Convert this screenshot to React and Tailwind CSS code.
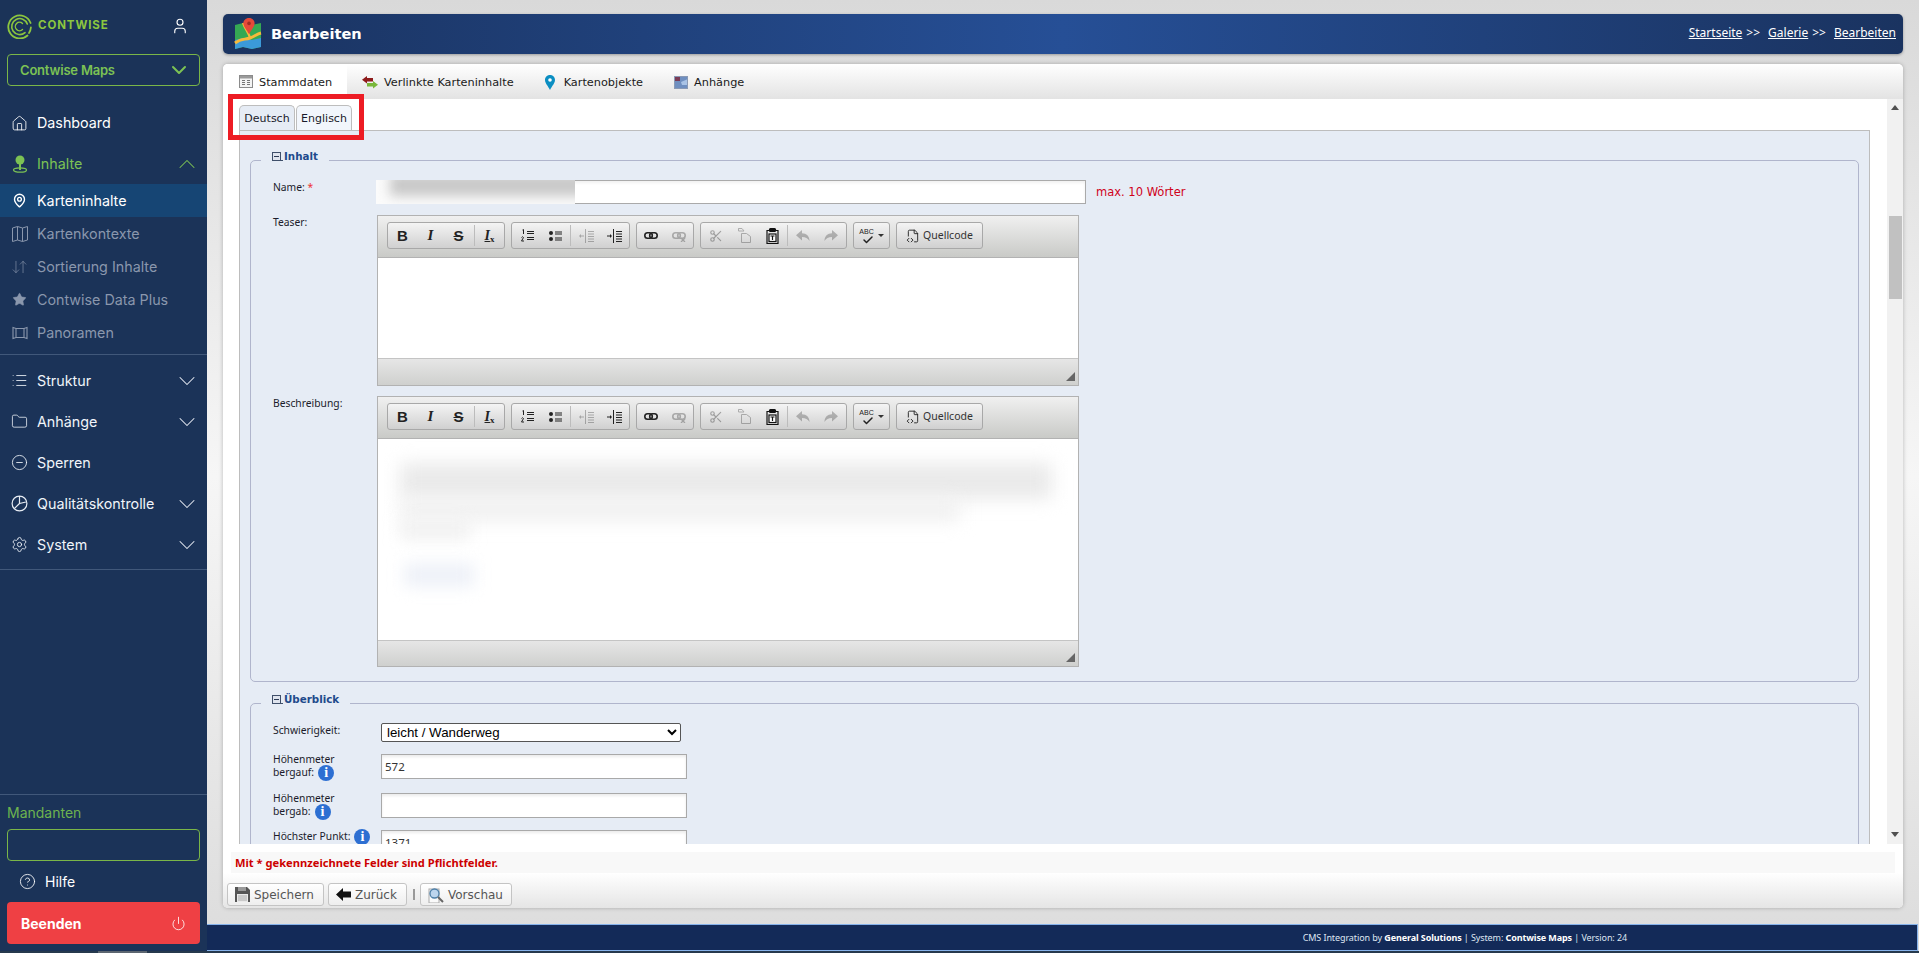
import React from "react";
import {
  User, ChevronDown, ChevronUp, House, MapPin, ArrowDownUp, Star, List as ListIcon, Folder, CircleMinus,
  Settings, CircleHelp, Power, Scissors, Check, FileCode2,
} from "lucide-react";

const Logo = () => (
  <svg width="25" height="25" viewBox="0 0 25 25" fill="none" stroke="#8cc63f" strokeLinecap="round">
    <path d="M20.5 21.5A11.5 11.5 0 1 1 23.6 9" strokeWidth="1.8" />
    <path d="M23.9 13.5A11.5 11.5 0 0 1 22 19" strokeWidth="1.8" />
    <path d="M18 18.6A8 8 0 1 1 20.3 10" strokeWidth="1.6" />
    <path d="M15.5 9.5A4.2 4.2 0 1 0 15.5 15.5" strokeWidth="1.4" />
  </svg>
);

const PinBall = () => (
  <svg width="16" height="18" viewBox="0 0 16 18" fill="#7cc254">
    <circle cx="8" cy="5" r="4.5" />
    <rect x="7" y="8" width="2" height="7" />
    <ellipse cx="8" cy="15" rx="6.5" ry="2.2" fill="none" stroke="#7cc254" strokeWidth="1.3" />
  </svg>
);

const FoldMap = () => (
  <svg width="16" height="16" viewBox="0 0 16 16" fill="none" stroke="#8a97ad" strokeWidth="1">
    <path d="M.5 2l5-1.500 5 1.500 5-1.500v13.500l-5 1.500-5-1.500-5 1.500z" />
    <path d="M5.500.5v13.500M10.500 2v13.500" />
  </svg>
);

const Panorama = () => (
  <svg width="16" height="16" viewBox="0 0 16 16" fill="none" stroke="#8a97ad" strokeWidth="1.1">
    <path d="M1 2.5l3 1h8l3-1v11l-3-1H4l-3 1z" />
    <path d="M4 3.5v9M12 3.5v9" />
  </svg>
);

const PieIcon = () => (
  <svg width="17" height="17" viewBox="0 0 17 17" fill="none" stroke="#e8edf4" strokeWidth="1.2">
    <circle cx="8.5" cy="8.5" r="7.4" />
    <path d="M8.5 1.1v7.4l6.4-1.500M8.500 8.500l-5.200 5.200" />
  </svg>
);

const MapLogo = () => (
  <svg width="28" height="32" viewBox="0 0 28 32">
    <path d="M1 7l8-2 9 2 9-2v24l-9 2-9-2-8 2z" fill="#35a853" />
    <path d="M1 22l8-2 9 2 9-2v9l-9 2-9-2-8 2z" fill="#3b9ad9" />
    <path d="M1 25c6-5 10-3 15-5s7-4 11-5" stroke="#f6b93b" strokeWidth="3" fill="none" />
    <path d="M9 5c2 6 6 10 7 15" stroke="#f6b93b" strokeWidth="2.2" fill="none" />
    <path d="M15 0c3.6 0 5.6 2.6 5.6 5.4 0 3.4-3.6 6.6-5.6 10.6-2-4-5.6-7.2-5.6-10.6C9.400 2.600 11.400 0 15 0z" fill="#e5493a" />
    <circle cx="15" cy="5.400" r="1.800" fill="#a02c22" />
  </svg>
);

const TableIcon = () => (
  <svg width="14" height="15" viewBox="0 0 14 15">
    <rect x=".5" y=".5" width="13" height="12" fill="#f4f4f4" stroke="#8b8b8b" />
    <rect x="1" y="1" width="12" height="2.500" fill="#9a9a9a" />
    <path d="M3 5.500h3M8 5.500h3M3 7.500h3M8 7.500h3M3 9.500h3M8 9.500h3" stroke="#777" />
  </svg>
);

const LinkArrows = () => (
  <svg width="16" height="13" viewBox="0 0 16 13">
    <path d="M5 0v2h6v3.500H5v2L0 3.700z" fill="#8e1b1b" />
    <path d="M11 5v2H5v3.500h6v2l5-3.800z" fill="#79b73a" />
  </svg>
);

const BluePin = () => (
  <svg width="10" height="15" viewBox="0 0 10 15">
    <path d="M5 0c3 0 5 2.200 5 5 0 3-3 6-5 10-2-4-5-7-5-10 0-2.800 2-5 5-5z" fill="#0b8ec2" />
    <circle cx="5" cy="5" r="1.800" fill="#fff" />
  </svg>
);

const Attach = () => (
  <svg width="14" height="13" viewBox="0 0 14 13">
    <rect width="14" height="13" fill="#6f8fc0" />
    <path d="M0 0h6v5H0z" fill="#7a3b56" />
    <path d="M7 6l7-3v6H8z" fill="#a9c3e6" />
    <rect x=".5" y=".5" width="13" height="12" fill="none" stroke="#8a9ab5" />
  </svg>
);

const Collapse = () => (
  <span className="inline-flex items-end mr-[1px]">
    <span className="w-[9px] h-[9px] border border-[#3f4f6a] bg-[#dfe4ee] flex items-center justify-center">
      <span className="w-[5px] h-px bg-[#2c3a55]" />
    </span>
    <span className="w-[2px] h-px bg-[#3f4f6a]" />
  </span>
);

const Info = () => (
  <span className="inline-flex shrink-0 w-[16px] h-[16px] rounded-full bg-[#2d6fd2] text-white items-center justify-center font-['Liberation_Serif',serif] font-bold text-[14px] leading-none">i</span>
);

const SideRow = ({ icon, label, h, color = "text-[#f1f5fa]", chevron, active }) => (
  <div className={`flex items-center pl-[11px] pr-[6px] ${h} ${color} ${active ? "bg-[#164574]" : ""}`}>
    <span className="w-[17px] flex justify-center mr-[9px] shrink-0">{icon}</span>
    <span className="flex-1 pt-[1px] text-[14.3px] leading-none">{label}</span>
    {chevron}
  </div>
);

const Down = () => <ChevronDown size={28} strokeWidth={0.9} className="text-[#e8edf4] -my-[4px]" />;

function Sidebar() {
  return (
    <aside className="w-[207px] shrink-0 bg-[#1b3358] flex flex-col font-['Inter',sans-serif]">
      <div className="flex items-center h-[24px] mt-[14px] pl-[7px]">
        <Logo />
        <span className="ml-[6px] text-[#8cc63f] text-[11.5px] font-bold tracking-[0.9px] leading-none">CONTWISE</span>
        <User size={18} strokeWidth={1.5} className="text-white ml-[62px]" />
      </div>
      <div className="mx-[7px] mt-[16px] h-[32px] border border-[#7ab648] rounded-[4px] flex items-center justify-between pl-[12px] pr-[8px] text-[#7cc254] font-semibold text-[13px] tracking-[-0.2px]">
        <span className="pt-[1px]">Contwise Maps</span>
        <ChevronDown size={24} strokeWidth={2} />
      </div>
      <div className="mt-[20px]">
        <SideRow h="h-[34px]" icon={<House size={17} strokeWidth={1.2} />} label="Dashboard" color="text-white" />
      </div>
      <div className="mt-[7px]">
        <SideRow
          h="h-[34px]"
          color="text-[#7cc254]"
          icon={<PinBall />}
          label="Inhalte"
          chevron={<ChevronUp size={28} strokeWidth={0.9} className="-my-[4px]" />}
        />
      </div>
      <div className="mt-[3px]">
        <SideRow h="h-[33px]" active color="text-white" icon={<MapPin size={15} strokeWidth={2.2} />} label="Karteninhalte" />
        <SideRow h="h-[33px]" color="text-[#8a97ad]" icon={<FoldMap />} label="Kartenkontexte" />
        <SideRow h="h-[33px]" color="text-[#8a97ad]" icon={<ArrowDownUp size={18} strokeWidth={0.9} />} label="Sortierung Inhalte" />
        <SideRow h="h-[33px]" color="text-[#8a97ad]" icon={<Star size={15} fill="currentColor" strokeWidth={1} />} label="Contwise Data Plus" />
        <SideRow h="h-[33px]" color="text-[#8a97ad]" icon={<Panorama />} label="Panoramen" />
      </div>
      <div className="h-px bg-[#41587a] mt-[5px]" />
      <div className="mt-[5px]">
        <SideRow h="h-[41px]" icon={<ListIcon size={17} strokeWidth={1.2} />} label="Struktur" chevron={<Down />} />
        <SideRow h="h-[41px]" icon={<Folder size={17} strokeWidth={1.1} />} label="Anhänge" chevron={<Down />} />
        <SideRow h="h-[41px]" icon={<CircleMinus size={17} strokeWidth={1.2} />} label="Sperren" />
        <SideRow h="h-[41px]" icon={<PieIcon />} label="Qualitätskontrolle" chevron={<Down />} />
        <SideRow h="h-[41px]" icon={<Settings size={17} strokeWidth={1.2} />} label="System" chevron={<Down />} />
      </div>
      <div className="h-px bg-[#41587a] mt-[4px]" />
      <div className="flex-1" />
      <div className="h-px bg-[#41587a]" />
      <div className="pl-[7px] mt-[9px] text-[14px] leading-[17px] text-[#6db34f]">Mandanten</div>
      <div className="mx-[7px] mt-[8px] h-[32px] border border-[#7ab648] rounded-[4px]" />
      <div className="flex items-center h-[21px] mt-[10px] pl-[19px] text-white text-[14px]">
        <CircleHelp size={17} strokeWidth={1.2} />
        <span className="ml-[9px]">Hilfe</span>
      </div>
      <div className="mx-[7px] mt-[10px] mb-[7px] h-[42px] bg-[#ef4044] rounded-[4px] flex items-center justify-between pl-[14px] pr-[14px] text-white font-bold text-[14px]">
        <span>Beenden</span>
        <Power size={15} strokeWidth={1.3} />
      </div>
    </aside>
  );
}

const Tab = ({ icon, label, active, cls }) => (
  <div className={`h-full flex items-center pt-[2px] ${cls} ${active ? "bg-white" : ""}`}>
    <span className="flex justify-center items-center">{icon}</span>
    <span className="text-[11.3px] text-[#1a1a1a] leading-none">{label}</span>
  </div>
);

const Sep = () => <span className="w-px h-[21px] bg-[#bcbcbc] mx-[1px]" />;

const TB = ({ children, dim }) => (
  <span className={`w-[28px] h-full flex items-center justify-center ${dim ? "opacity-30" : "text-[#222]"}`}>{children}</span>
);

const Group = ({ w, children }) => (
  <div className={`h-[27px] ${w} border border-[#a8a8a8] rounded-[3px] bg-gradient-to-b from-[#f4f4f4] to-[#d0d0d0] flex items-center justify-center`}>
    {children}
  </div>
);

const UndoIcon = ({ flip }) => (
  <svg width="14" height="12" viewBox="0 0 14 12" className={flip ? "-scale-x-100" : ""} fill="#333">
    <path d="M6 0v3.200c4.500 0 7.500 2.800 7.500 7.800C12 8.200 9.500 7 6 7v3.500L0 5.200z" />
  </svg>
);

const OrderedIc = () => (
  <svg width="13" height="13" viewBox="0 0 13 13" fill="none" stroke="#222">
    <path d="M1.500 1l1-.5V5M6 2.500h7M6 4.500h7M.5 8.500q1-1.500 2 0L.5 12h2.500M6 8.500h7M6 10.500h7" strokeWidth="1" />
  </svg>
);

const BulletIc = () => (
  <svg width="13" height="12" viewBox="0 0 13 12" fill="#222">
    <circle cx="2" cy="3" r="2" />
    <circle cx="2" cy="9" r="2" />
    <path d="M6 1.500h7v1H6zM6 3.500h7v1H6zM6 7.500h7v1H6zM6 9.500h7v1H6z" />
  </svg>
);

const IndentIc = ({ out }) => (
  <svg width="15" height="14" viewBox="0 0 15 14" fill="#222">
    <rect x="6" y="0" width="1" height="14" />
    <path d="M9 2h6v1H9zM9 4.500h6v1H9zM9 7h6v1H9zM9 9.500h6v1H9zM9 12h6v1H9z" />
    {out ? <path d="M0 6.500h3V5l2 2-2 2V7.500H0z" transform="rotate(180 2.500 7)" /> : <path d="M0 6.500h3V5l2 2-2 2V7.500H0z" />}
  </svg>
);

const LinkIc = ({ off }) => (
  <svg width="14" height="12" viewBox="0 0 14 12" fill="none" stroke="#222" strokeWidth="1.600">
    <rect x=".8" y="2.800" width="7.500" height="5.400" rx="2.700" />
    <rect x="5.700" y="2.800" width="7.500" height="5.400" rx="2.700" />
    {off ? <path d="M9 8l4 4M13 8l-4 4" strokeWidth="1.300" /> : null}
  </svg>
);

const DocIc = () => (
  <svg width="13" height="15" viewBox="0 0 13 15" fill="none" stroke="#222">
    <path d="M.5.500H4l2 2.500H.5zM.5 3v-2.500M3.500 5.500h5l4 3v6h-9z" />
  </svg>
);

const PasteIc = () => (
  <svg width="13" height="16" viewBox="0 0 13 16" fill="none" stroke="#111" strokeWidth="1.200">
    <path d="M3 2.500H1v13h11v-13h-2" />
    <rect x="3.500" y=".6" width="6" height="2.800" rx="1" fill="#111" />
    <rect x="3" y="6" width="7" height="7.500" fill="#fff" />
    <path d="M4.500 8h4M6.500 8v4" />
  </svg>
);

function Toolbar() {
  return (
    <div className="h-[42px] border-b border-[#b2b2b2] bg-gradient-to-b from-[#f0f0f0] to-[#c9cac7] flex items-start pt-[6px] pl-[9px] gap-[6px]">
      <Group w="w-[118px]">
        <TB><b className="font-['Liberation_Sans',sans-serif] text-[15px] leading-none">B</b></TB>
        <TB><i className="font-['Liberation_Serif',serif] font-bold text-[15px] leading-none">I</i></TB>
        <TB><b className="font-['Liberation_Sans',sans-serif] text-[15px] leading-none line-through">S</b></TB>
        <Sep />
        <TB>
          <span className="font-['Liberation_Serif',serif] font-bold italic text-[14px] leading-none underline">I<sub className="text-[9px] not-italic">x</sub></span>
        </TB>
      </Group>
      <Group w="w-[119px]">
        <TB><OrderedIc /></TB>
        <TB><BulletIc /></TB>
        <Sep />
        <TB dim><IndentIc out /></TB>
        <TB><IndentIc /></TB>
      </Group>
      <Group w="w-[58px]">
        <TB><LinkIc /></TB>
        <TB dim><LinkIc off /></TB>
      </Group>
      <Group w="w-[147px]">
        <TB dim><Scissors size={14} strokeWidth={2} /></TB>
        <TB dim><DocIc /></TB>
        <TB><PasteIc /></TB>
        <Sep />
        <TB dim><UndoIcon /></TB>
        <TB dim><UndoIcon flip /></TB>
      </Group>
      <Group w="w-[37px]">
        <span className="relative w-[15px] h-[16px] flex justify-center text-[7px] leading-[8px] font-['Liberation_Sans',sans-serif] text-[#222]">
          ABC
          <Check size={12} strokeWidth={3} className="absolute left-[3px] top-[6px] text-[#222]" />
        </span>
        <span className="ml-[4px] w-0 h-0 border-x-[3px] border-x-transparent border-t-[3px] border-t-[#333]" />
      </Group>
      <Group w="w-[87px]">
        <FileCode2 size={14} strokeWidth={1.6} className="text-[#222] mr-[3px]" />
        <span className="text-[10.5px] text-[#333] font-['Noto_Sans',sans-serif] leading-none">Quellcode</span>
      </Group>
    </div>
  );
}

const Editor = ({ h, bottom, children }) => (
  <div className="w-[702px] -ml-[4px] border border-[#b2b2b2]">
    <Toolbar />
    <div className={`${h} bg-white overflow-hidden`}>{children}</div>
    <div className={`${bottom} border-t border-[#c4c4c4] bg-gradient-to-b from-[#e6e6e6] to-[#cfd0ce] flex items-end justify-end pr-[3px] pb-[4px]`}>
      <span className="w-0 h-0 border-l-[9px] border-l-transparent border-b-[9px] border-b-[#666]" />
    </div>
  </div>
);

const Label = ({ children, cls = "" }) => (
  <div className={`w-[108px] shrink-0 font-['Noto_Sans',sans-serif] text-[10.3px] leading-[13px] text-[#1b1b2b] ${cls}`}>{children}</div>
);

const Field = ({ value }) => (
  <input
    readOnly
    value={value}
    className="block w-[306px] h-[25px] border border-[#a9a9a9] bg-white px-[3px] font-['Noto_Sans',sans-serif] text-[11.5px] text-[#333] outline-none shadow-[inset_0_2px_3px_rgba(0,0,0,0.08)]"
  />
);

const Legend = ({ children }) => (
  <legend className="-ml-[12px] px-[11px] pb-[8px] flex items-center text-[10.3px] leading-[14px] font-bold text-[#1f4a8c]">
    <Collapse />
    {children}
  </legend>
);

const InfoLine = ({ text }) => (
  <div className="flex items-center h-[13px] gap-[4px]">
    <span>{text}</span>
    <Info />
  </div>
);

function Form() {
  return (
    <div className="border border-[#bdbdbd] border-b-0 bg-[#e6ecf5] h-[900px] px-[10px] pt-[18px] mr-[17px]">
      <fieldset className="border border-[#b0b5cc] rounded-[5px] pl-[22px] pb-[14px]">
        <Legend>Inhalt</Legend>
        <div className="flex pt-[9px]">
          <Label cls="leading-[14px]">
            Name: <span className="text-[#e33]">*</span>
          </Label>
          <div className="relative">
            <input readOnly value="" className="block w-[705px] h-[24px] border border-[#aaa] bg-white shadow-[inset_0_2px_3px_rgba(0,0,0,0.06)]" />
            <span className="absolute -left-[5px] top-0 w-[199px] h-full overflow-hidden bg-[#fbfbfb]">
              <span className="block ml-[14px] -mr-[30px] -mt-[6px] h-[22px] bg-[#c8c8c8] blur-[6px]" />
            </span>
          </div>
          <span className="ml-[10px] pt-[5px] text-[11.5px] leading-[14px] text-[#d0021b]">max. 10 Wörter</span>
        </div>
        <div className="flex mt-[11px]">
          <Label cls="leading-[14px]">Teaser:</Label>
          <Editor h="h-[100px]" bottom="h-[27px]" />
        </div>
        <div className="flex mt-[10px]">
          <Label cls="leading-[14px]">Beschreibung:</Label>
          <Editor h="h-[201px]" bottom="h-[26px]">
            <div className="pl-[22px] pr-[26px] pt-[24px]">
              <div className="h-[36px] bg-[#eaeaea] blur-[9px]" />
              <div className="h-[22px] w-[560px] bg-[#f0f0f0] blur-[9px]" />
              <div className="h-[18px] w-[70px] bg-[#f0f0f0] blur-[8px]" />
              <div className="h-[24px] w-[70px] mt-[24px] ml-[4px] bg-[#eef1f8] blur-[8px]" />
            </div>
          </Editor>
        </div>
      </fieldset>
      <fieldset className="mt-[10px] border border-[#b0b5cc] rounded-[5px] pl-[22px] pb-[15px]">
        <Legend>Überblick</Legend>
        <div className="flex pt-[9px]">
          <Label cls="pt-[1px]">Schwierigkeit:</Label>
          <select defaultValue="leicht" className="block w-[300px] h-[19px] border border-[#555] rounded-[2px] bg-white text-[13.3px] leading-none text-black font-['Liberation_Sans',sans-serif] pl-[1px]">
            <option value="leicht">leicht / Wanderweg</option>
          </select>
        </div>
        <div className="flex mt-[12px] h-[25px]">
          <Label cls="-mt-[1px]">Höhenmeter<InfoLine text="bergauf:" /></Label>
          <Field value="572" />
        </div>
        <div className="flex mt-[14px] h-[25px]">
          <Label cls="-mt-[1px]">Höhenmeter<InfoLine text="bergab:" /></Label>
          <Field value="" />
        </div>
        <div className="flex mt-[12px] h-[25px]">
          <Label><InfoLine text="Höchster Punkt:" /></Label>
          <Field value="1371" />
        </div>
      </fieldset>
    </div>
  );
}

const Btn = ({ w, icon, children }) => (
  <div className={`${w} h-[23px] border border-[#c4c4c4] rounded-[3px] bg-gradient-to-b from-white to-[#eeeeee] flex items-center pl-[7px] gap-[4px] text-[12px] text-[#555] leading-none`}>
    {icon}
    <span>{children}</span>
  </div>
);

const Floppy = () => (
  <svg width="15" height="15" viewBox="0 0 15 15">
    <path d="M0 0h12l3 3v12H0z" fill="#555" />
    <rect x="3" y="0" width="8" height="4" fill="#999" />
    <rect x="2" y="7" width="11" height="8" fill="#e9e9e9" />
    <path d="M3 9h9M3 11h9M3 13h9" stroke="#aaa" />
  </svg>
);

const BackArrow = () => (
  <svg width="15" height="13" viewBox="0 0 15 13">
    <path d="M7 0v3.500h8v6H7V13L0 6.500z" fill="#111" />
  </svg>
);

const Preview = () => (
  <svg width="16" height="16" viewBox="0 0 16 16">
    <rect x="1" y="2" width="10" height="14" fill="#fafafa" stroke="#aaa" />
    <circle cx="6.500" cy="6.500" r="4.500" fill="#bcd5ee" stroke="#4d7fa8" strokeWidth="1.300" />
    <path d="M10 10l5 5" stroke="#666" strokeWidth="2" />
  </svg>
);

function Main() {
  return (
    <div className="flex-1 min-w-0 flex flex-col bg-[linear-gradient(to_bottom,#d9d9d9,#f6f6f6_50%,#dcdcdc)] font-['DejaVu_Sans',sans-serif]">
      <div className="px-[16px] pt-[14px]">
        <header className="h-[40px] rounded-[5px] bg-[linear-gradient(to_right,#1a3360,#264f96_50%,#1a3360)] shadow-[0_1px_3px_rgba(0,0,0,0.3)] flex items-center pl-[11px] pr-[7px]">
          <MapLogo />
          <span className="ml-[9px] text-[14.6px] font-bold text-white leading-none flex-1">Bearbeiten</span>
          <span className="text-[12px] text-white leading-none font-['Noto_Sans',sans-serif] flex gap-[4px] pb-[2px]">
            <u>Startseite</u> <span>&gt;&gt;</span> <u className="ml-[4px]">Galerie</u> <span>&gt;&gt;</span> <u className="ml-[4px]">Bearbeiten</u>
          </span>
        </header>
        <section className="relative mt-[10px] h-[844px] rounded-[5px] bg-white shadow-[0_0_4px_rgba(0,0,0,0.25)] flex flex-col overflow-hidden">
          <div className="h-[35px] shrink-0 bg-gradient-to-b from-white to-[#e3e3e3] flex items-center">
            <Tab active cls="w-[124px] pl-[16px]" icon={<span className="mr-[6px] flex"><TableIcon /></span>} label="Stammdaten" />
            <Tab cls="pl-[15px]" icon={<span className="mr-[6px] flex"><LinkArrows /></span>} label="Verlinkte Karteninhalte" />
            <Tab cls="pl-[31px]" icon={<span className="mr-[9px] flex"><BluePin /></span>} label="Kartenobjekte" />
            <Tab cls="pl-[31px]" icon={<span className="mr-[6px] flex"><Attach /></span>} label="Anhänge" />
          </div>
          <div className="h-[745px] shrink-0 flex">
            <div className="flex-1 min-w-0 bg-white overflow-hidden pl-[16px] pt-[6px]">
              <div className="flex h-[25px] gap-px">
                <div className="w-[56px] pt-[1px] border border-[#bdbdbd] border-b-0 rounded-t-[5px] bg-[#e6ecf5] flex items-center justify-center text-[11px] text-[#1a1a2a] leading-none">Deutsch</div>
                <div className="w-[56px] pt-[1px] border border-[#bdbdbd] border-b-0 rounded-t-[5px] bg-[#f2f6fc] flex items-center justify-center text-[11px] text-[#1a1a2a] leading-none">Englisch</div>
              </div>
              <Form />
            </div>
            <div className="w-[16px] shrink-0 bg-[#f1f1f1] flex flex-col items-center pt-[6px]">
              <span className="w-0 h-0 border-x-[4px] border-x-transparent border-b-[5px] border-b-[#505050]" />
              <span className="w-[13px] h-[83px] bg-[#c1c1c1] mt-[106px]" />
              <span className="flex-1" />
              <span className="w-0 h-0 border-x-[4px] border-x-transparent border-t-[5px] border-t-[#505050] mb-[7px]" />
            </div>
          </div>
          <div className="flex-1 flex flex-col">
            <div className="mt-[8px] mx-[8px] h-[21px] bg-[#f8f8f8] flex items-center pl-[4px] font-['Noto_Sans',sans-serif] text-[11.15px] font-bold text-[#cc0000] leading-none">
              Mit * gekennzeichnete Felder sind Pflichtfelder.
            </div>
            <div className="flex-1 bg-gradient-to-b from-white to-[#e5e5e5] pl-[4px] pt-[10px] flex items-start">
              <Btn w="w-[97px]" icon={<Floppy />}>Speichern</Btn>
              <span className="w-[4px]" />
              <Btn w="w-[79px]" icon={<BackArrow />}>Zurück</Btn>
              <span className="w-[13px] h-[23px] flex items-center justify-center"><span className="w-[2px] h-[11px] bg-[#999]" /></span>
              <Btn w="w-[92px]" icon={<Preview />}>Vorschau</Btn>
            </div>
          </div>
          <div className="absolute left-[5px] top-[30px] w-[136px] h-[46px] border-[5px] border-[#ed1c24]" />
        </section>
      </div>
      <div className="flex-1" />
      <footer className="h-[27px] mr-px border-y border-[#86b2ea] border-r bg-[#132a58] flex items-center justify-end pr-[290px] text-[9px] text-[#dfe6f2] leading-none font-['Noto_Sans',sans-serif] tracking-[-0.1px]">
        <span>CMS Integration by <b className="text-white">General Solutions</b> | System: <b className="text-white">Contwise Maps</b> | Version: 24</span>
      </footer>
    </div>
  );
}

export default function App() {
  return (
    <div className="h-screen w-full overflow-hidden flex flex-col">
      <div className="flex-1 min-h-0 flex">
        <Sidebar />
        <Main />
      </div>
      <div className="h-[2px] shrink-0 bg-[#26394d]">
        <div className="ml-[98px] w-[49px] h-full bg-[#5c6670]" />
      </div>
    </div>
  );
}
